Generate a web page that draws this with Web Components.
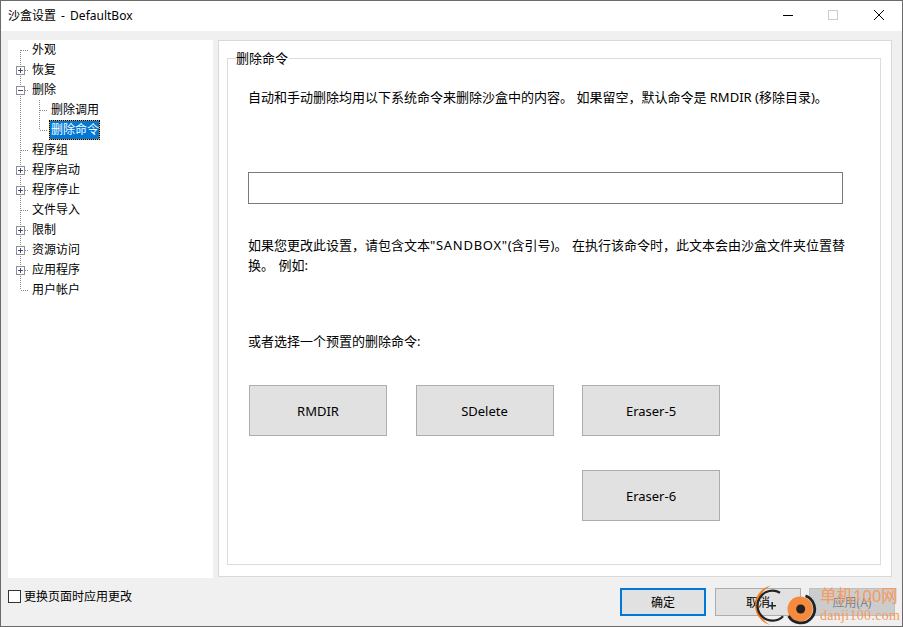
<!DOCTYPE html>
<html lang="zh">
<head>
<meta charset="utf-8">
<title>沙盒设置</title>
<style>
    html, body { margin: 0; padding: 0; }
    body {
        width: 903px;
        height: 627px;
        overflow: hidden;
        font: 12px/20px "Noto Sans", "Noto Sans CJK SC", sans-serif;
        color: #000;
    }
</style>
</head>
<body>
<settings-window caption="沙盒设置 - DefaultBox">
    <settings-tree slot="tree">
        <tree-item elbow="tee">外观</tree-item>
        <tree-item elbow="tee" toggle="plus">恢复</tree-item>
        <tree-item elbow="tee" toggle="minus">删除</tree-item>
        <tree-item level="1" elbow="tee" trunk>删除调用</tree-item>
        <tree-item level="1" elbow="end" trunk selected>删除命令</tree-item>
        <tree-item elbow="tee">程序组</tree-item>
        <tree-item elbow="tee" toggle="plus">程序启动</tree-item>
        <tree-item elbow="tee" toggle="plus">程序停止</tree-item>
        <tree-item elbow="tee">文件导入</tree-item>
        <tree-item elbow="tee" toggle="plus">限制</tree-item>
        <tree-item elbow="tee" toggle="plus">资源访问</tree-item>
        <tree-item elbow="tee" toggle="plus">应用程序</tree-item>
        <tree-item elbow="end">用户帐户</tree-item>
    </settings-tree>
    <group-box legend="删除命令">
        <p class="first">自动和手动删除均用以下系统命令来删除沙盒中的内容。 如果留空，默认命令是 RMDIR (移除目录)。</p>
        <text-field></text-field>
        <p class="second" style="word-spacing:1px">如果您更改此设置，请包含文本<span style="letter-spacing:.7px">"SANDBOX"</span>(含引号)。 在执行该命令时，此文本会由沙盒文件夹位置替换。 例如:</p>
        <p class="third">或者选择一个预置的删除命令:</p>
        <div class="presets">
            <preset-button>RMDIR</preset-button>
            <preset-button>SDelete</preset-button>
            <preset-button>Eraser-5</preset-button>
            <preset-button class="last">Eraser-6</preset-button>
        </div>
    </group-box>
    <check-box slot="footer-left">更换页面时应用更改</check-box>
    <dialog-button slot="footer-right" default style="margin-right:9px">确定</dialog-button>
    <dialog-button slot="footer-right" style="margin-right:8px">取消</dialog-button>
    <dialog-button slot="footer-right" disabled>应用(A)</dialog-button>
    <site-watermark slot="overlay"></site-watermark>
</settings-window>

<script>
class SettingsWindow extends HTMLElement{
    constructor(){
        super();
        this.attachShadow({mode: 'open'});
        this.shadowRoot.innerHTML = `
            <style>
                :host {
                    display: flex;
                    flex-direction: column;
                    position: relative;
                    box-sizing: border-box;
                    width: 903px;
                    height: 627px;
                    border: 1px solid #6b6b6b;
                    background: #f0f0f0;
                    overflow: hidden;
                }
                #title {
                    display: flex;
                    align-items: center;
                    height: 30px;
                    background: #fff;
                    padding-left: 7px;
                }
                #caption { flex: 1; word-spacing: 2px; }
                .ctl { width: 46px; height: 30px; display: block; }
                #controls { display: flex; margin-right: 1px; }
                #main {
                    display: flex;
                    gap: 5px;
                    height: 538px;
                    padding: 9px 10px 0 7px;
                }
                #footer {
                    display: flex;
                    justify-content: space-between;
                    padding: 10px 7px 0 7px;
                }
                #right { display: flex; }
            </style>
            <div id="title">
                <span id="caption"></span>
                <div id="controls">
                    <svg class="ctl" viewBox="0 0 46 30"><path d="M20 14.500h10" stroke="#000" fill="none"/></svg>
                    <svg class="ctl" viewBox="0 0 46 30"><rect x="19.500" y="9.500" width="9" height="9" fill="none" stroke="#ccc"/></svg>
                    <svg class="ctl" viewBox="0 0 46 30"><path d="M19 9l10 10M29 9l-10 10" stroke="#000" fill="none"/></svg>
                </div>
            </div>
            <div id="main">
                <slot name="tree"></slot>
                <slot></slot>
            </div>
            <div id="footer">
                <slot name="footer-left"></slot>
                <div id="right"><slot name="footer-right"></slot></div>
            </div>
            <slot name="overlay"></slot>
        `;
        this.shadowRoot.querySelector('#caption').textContent = this.getAttribute('caption');
    }
}

class SettingsTree extends HTMLElement{
    constructor(){
        super();
        this.attachShadow({mode: 'open'});
        this.shadowRoot.innerHTML = `
            <style>
                :host {
                    display: block;
                    width: 205px;
                    flex: none;
                    background: #fff;
                    box-sizing: border-box;
                }
            </style>
            <slot></slot>
        `;
    }
}

class TreeItem extends HTMLElement{
    constructor(){
        super();
        this.attachShadow({mode: 'open'});
        const nested = this.getAttribute('level') === '1';
        const end = this.getAttribute('elbow') === 'end';
        const toggle = this.getAttribute('toggle');
        // x positions of the dotted lines in the gutter, tree starts at x=8
        let lines = '';
        const dots = 'stroke="#8a8a8a" stroke-dasharray="1 1" fill="none"';
        if(nested){
            lines += `<path d="M12.5 0V20" ${dots}/>`;
            lines += `<path d="M31.5 0V${end ? 10 : 20}M32 10.5H40" ${dots}/>`;
        }else{
            lines += `<path d="M12.5 ${this.previousElementSibling ? 0 : 10}V${end ? 10 : 20}M13 10.5H21" ${dots}/>`;
        }
        let box = '';
        if(toggle){
            box = `<rect x="8.5" y="6.5" width="8" height="8" fill="#fff" stroke="#8f8f8f"/>
                   <path d="M10 10.5h5" stroke="#3b4f8f"/>` +
                   (toggle === 'plus' ? `<path d="M12.5 8v5" stroke="#3b4f8f"/>` : '');
        }
        this.shadowRoot.innerHTML = `
            <style>
                :host { display: flex; height: 20px; align-items: center; }
                svg { display: block; flex: none; }
                #label { padding: 0 1px; white-space: nowrap; }
                :host([selected]) #label {
                    box-sizing: border-box;
                    width: 51px;
                    height: 20px;
                    margin-left: -1px;
                    padding: 0 0 0 2px;
                    background: #0078d7;
                    color: #fff;
                    box-shadow: inset 0 0 0 1px #f0a030;
                    outline: 1px dotted #000;
                    outline-offset: -1px;
                }
            </style>
            <svg width="${nested ? 42 : 23}" height="20">${lines}${box}</svg>
            <span id="label"><slot></slot></span>
        `;
    }
}

class GroupBox extends HTMLElement{
    constructor(){
        super();
        this.attachShadow({mode: 'open'});
        this.shadowRoot.innerHTML = `
            <style>
                :host {
                    display: block;
                    flex: 1;
                    box-sizing: border-box;
                    height: 537px;
                    background: #fff;
                    border: 1px solid #d9d9d9;
                    padding: 17px 10px 12px 8px;
                    font-size: 13px;
                }
                #box {
                    position: relative;
                    box-sizing: border-box;
                    height: 507px;
                    border: 1px solid #dcdcdc;
                    padding: 28px 20px 0 20px;
                }
                #legend {
                    position: absolute;
                    top: -10px;
                    left: 8px;
                    background: #fff;
                    padding: 0 1px 0 0;
                    line-height: 18px;
                }
                ::slotted(p) { margin: 0; }
                ::slotted(p.first) { margin-bottom: 65px; }
                ::slotted(p.second) { margin-top: 31px; margin-bottom: 56px; width: 600px; }
                ::slotted(p.third) { margin-bottom: 34px; }
                ::slotted(.presets) {
                    display: grid;
                    grid-template-columns: 138px 138px 138px;
                    grid-auto-rows: 51px;
                    column-gap: 28.5px;
                    row-gap: 34px;
                    margin-left: 1px;
                }
            </style>
            <div id="box">
                <div id="legend"></div>
                <slot></slot>
            </div>
        `;
        this.shadowRoot.querySelector('#legend').textContent = this.getAttribute('legend');
    }
}

class TextField extends HTMLElement{
    constructor(){
        super();
        this.attachShadow({mode: 'open'});
        this.shadowRoot.innerHTML = `
            <style>
                :host {
                    display: block;
                    box-sizing: border-box;
                    width: 595px;
                    height: 32px;
                    background: #fff;
                    border: 1px solid #7a7a7a;
                }
            </style>
        `;
    }
}

class PresetButton extends HTMLElement{
    constructor(){
        super();
        this.attachShadow({mode: 'open'});
        this.shadowRoot.innerHTML = `
            <style>
                :host {
                    display: flex;
                    align-items: center;
                    justify-content: center;
                    box-sizing: border-box;
                    background: #e1e1e1;
                    border: 1px solid #adadad;
                }
                :host(.last) { grid-column: 3; }
            </style>
            <slot></slot>
        `;
    }
}

class CheckBox extends HTMLElement{
    constructor(){
        super();
        this.attachShadow({mode: 'open'});
        this.shadowRoot.innerHTML = `
            <style>
                :host { display: flex; align-items: center; gap: 3px; height: 13px; margin-top: 2px; }
                #mark { width: 13px; height: 13px; box-sizing: border-box; border: 1px solid #333; background: #fff; }
            </style>
            <div id="mark"></div>
            <slot></slot>
        `;
    }
}

class DialogButton extends HTMLElement{
    constructor(){
        super();
        this.attachShadow({mode: 'open'});
        this.shadowRoot.innerHTML = `
            <style>
                :host {
                    display: inline-flex;
                    align-items: center;
                    justify-content: center;
                    box-sizing: border-box;
                    width: 86px;
                    height: 28px;
                    padding-top: 1px;
                    background: #e1e1e1;
                    border: 1px solid #adadad;
                }
                :host([default]) { border: 2px solid #0078d7; }
                :host([disabled]) { background: #ccc; border-color: #bfbfbf; color: #838383; }
            </style>
            <slot></slot>
        `;
    }
}

class SiteWatermark extends HTMLElement{
    constructor(){
        super();
        this.attachShadow({mode: 'open'});
        this.shadowRoot.innerHTML = `
            <style>
                :host { position: absolute; left: 749px; top: 577px; width: 153px; height: 48px; pointer-events: none; }
                svg { position: absolute; left: 0; top: 0; }
                #cn { position: absolute; left: 70px; top: 7px; font-size: 16.500px; line-height: 22px; color: #f79a5c; white-space: nowrap; }
                #en { position: absolute; left: 70px; top: 30px; font: 14px/16px "Liberation Serif", serif; letter-spacing: .3px; color: #f79a5c; white-space: nowrap; }
            </style>
            <svg width="70" height="48" viewBox="0 0 70 48">
                <path d="M21.700 7.300A20.400 20.400 0 0 0 20 47A22 22 0 0 1 21.700 7.300Z" fill="#f07f1e"/>
                <path d="M30 14.700A15 15 0 1 0 33.100 38.300" stroke="#222" stroke-width="2.200" fill="none"/>
                <path d="M18.500 27.700h7.500M22.200 24v7.500" stroke="#222" stroke-width="1.500" fill="none"/>
                <circle cx="50" cy="31" r="12.500" fill="#f58a3c"/>
                <path d="M55.500 17.800A14 14 0 1 1 38.600 38" stroke="#222" stroke-width="2.800" fill="none"/>
                <circle cx="50.700" cy="31" r="4.500" fill="#222"/>
            </svg>
            <div id="cn">单机100网</div>
            <div id="en">danji100.com</div>
        `;
    }
}

customElements.define('settings-window', SettingsWindow);
customElements.define('settings-tree', SettingsTree);
customElements.define('tree-item', TreeItem);
customElements.define('group-box', GroupBox);
customElements.define('text-field', TextField);
customElements.define('preset-button', PresetButton);
customElements.define('check-box', CheckBox);
customElements.define('dialog-button', DialogButton);
customElements.define('site-watermark', SiteWatermark);
</script>
</body>
</html>
